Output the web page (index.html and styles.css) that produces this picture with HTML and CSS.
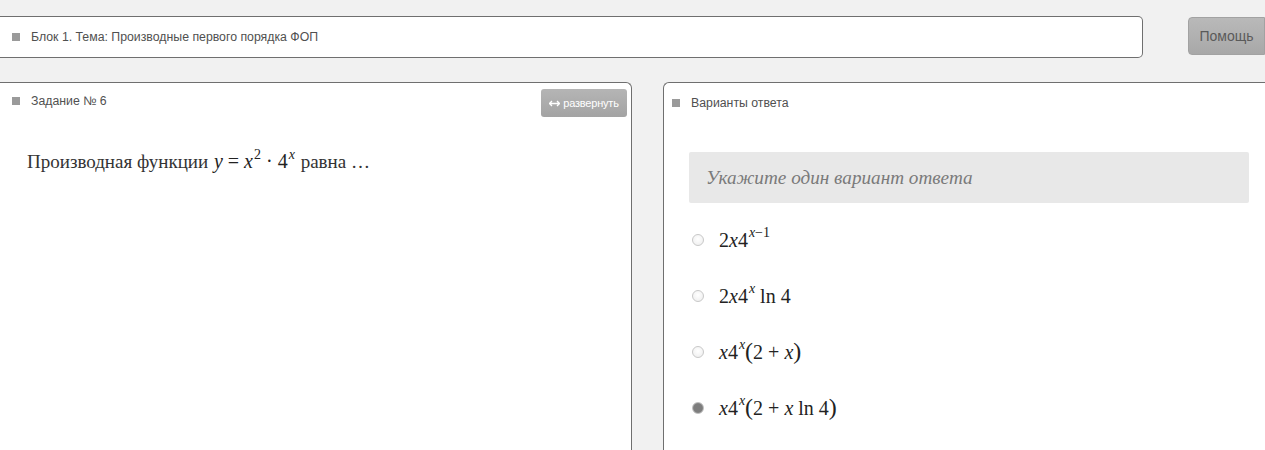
FILE: index.html
```html
<!DOCTYPE html>
<html lang="ru">
<head>
<meta charset="utf-8">
<title>Задание № 6</title>
<link rel="stylesheet" href="styles.css">
</head>
<body>
<div class="topbar">
  <div class="crumb"><span class="sq"></span>Блок 1. Тема: Производные первого порядка ФОП</div>
  <button class="help">Помощь</button>
</div>
<div class="panels">
  <section class="panel task">
    <div class="panel-head">
      <div class="title"><span class="sq"></span>Задание № 6</div>
      <button class="expand"><svg width="11" height="7" viewBox="0 0 11 7"><path d="M0.5 3.5h10M3 1L0.5 3.5 3 6M8 1l2.5 2.5L8 6" fill="none" stroke="#fff" stroke-width="1.3"/></svg>развернуть</button>
    </div>
    <p class="question">Производная функции <span class="m"><i>y</i> = <i>x</i><sup>2</sup> · 4<sup><i>x</i></sup></span> равна …</p>
  </section>
  <section class="panel answers">
    <div class="panel-head">
      <div class="title"><span class="sq"></span>Варианты ответа</div>
    </div>
    <div class="prompt">Укажите один вариант ответа</div>
    <ul class="options">
      <li><span class="radio"></span><span class="m">2<i>x</i>4<sup><i>x</i>−1</sup></span></li>
      <li><span class="radio"></span><span class="m">2<i>x</i>4<sup><i>x</i></sup> ln 4</span></li>
      <li><span class="radio"></span><span class="m"><i>x</i>4<sup><i>x</i></sup><span class="par">(</span>2 + <i>x</i><span class="par">)</span></span></li>
      <li><span class="radio checked"></span><span class="m"><i>x</i>4<sup><i>x</i></sup><span class="par">(</span>2 + <i>x</i> ln 4<span class="par">)</span></span></li>
    </ul>
  </section>
</div>
</body>
</html>
```
FILE: styles.css
```css
html, body {
  margin: 0;
  padding: 0;
}
body {
  width: 1265px;
  height: 450px;
  overflow: hidden;
  background: #f1f1f1;
  font-family: "Liberation Sans", Arial, sans-serif;
  color: #444;
}

.sq {
  display: inline-block;
  width: 8px;
  height: 8px;
  background: #9a9a9a;
  margin-right: 11px;
  flex: none;
}

/* breadcrumb bar and help button */
.topbar {
  display: flex;
  align-items: flex-start;
  padding-top: 16px;
  gap: 45px;
}
.crumb {
  flex: 1;
  height: 42px;
  box-sizing: border-box;
  background: #fff;
  border: 1px solid #6f6f6f;
  border-left: none;
  border-radius: 0 5px 5px 0;
  display: flex;
  align-items: center;
  padding-left: 12px;
  font-size: 12.3px;
  color: #505050;
}
.help {
  flex: none;
  width: 77px;
  height: 38px;
  margin-top: 1px;
  border: 1px solid #a2a2a2;
  border-radius: 4px 0 0 4px;
  background: linear-gradient(#b9b9b9, #a8a8a8);
  color: #5a5a5a;
  font-family: "Liberation Sans", Arial, sans-serif;
  font-size: 14px;
  padding: 0;
}

/* two panels */
.panels {
  display: grid;
  grid-template-columns: 632px 1fr;
  column-gap: 31px;
  margin-top: 24px;
  margin-right: -20px;
}
.panel {
  background: #fff;
  height: 380px;
  border-top: 1px solid #6f6f6f;
}
.task {
  border-right: 1px solid #6f6f6f;
  border-radius: 0 6px 0 0;
}
.answers {
  border-left: 1px solid #6f6f6f;
  border-radius: 6px 0 0 0;
}
.panel-head {
  display: flex;
  justify-content: space-between;
  align-items: flex-start;
}
.title {
  display: flex;
  align-items: center;
  font-size: 12.3px;
  color: #505050;
}
.task .panel-head {
  padding: 6px 4px 0 12px;
}
.task .title {
  margin-top: 5px;
}
.answers .panel-head {
  padding: 13px 0 0 8px;
}
.expand {
  width: 86px;
  height: 28px;
  border: none;
  border-radius: 3px;
  background: linear-gradient(#b5b5b5, #a3a3a3);
  color: #fff;
  font-family: "Liberation Sans", Arial, sans-serif;
  font-size: 11px;
  letter-spacing: -0.2px;
  display: flex;
  align-items: center;
  justify-content: center;
  gap: 3px;
  padding: 0;
}

.m {
  font-family: "Liberation Serif", "Times New Roman", serif;
  color: #222;
}
.m i {
  font-style: italic;
}
.m sup {
  font-size: 0.7em;
  line-height: 0;
  vertical-align: 0.65em;
  margin-left: 1px;
}
.par {
  font-size: 1.2em;
  line-height: 0;
}

.question {
  margin: 33px 0 0 27px;
  font-family: "Liberation Serif", "Times New Roman", serif;
  font-size: 19px;
  color: #333;
}
.question .m {
  margin: 0 1px;
  font-size: 20px;
}

.prompt {
  margin: 42px 36px 0 25px;
  height: 51px;
  background: #e8e8e8;
  border-radius: 2px;
  display: flex;
  align-items: center;
  padding-left: 17px;
  font-family: "Liberation Serif", "Times New Roman", serif;
  font-style: italic;
  font-size: 19.2px;
  color: #7a7a7a;
}

.options {
  list-style: none;
  margin: 9px 0 0 0;
  padding: 0 0 0 28px;
}
.options li {
  height: 56px;
  display: flex;
  align-items: center;
  gap: 15px;
}
.options .m {
  font-size: 20px;
}
.radio {
  width: 10px;
  height: 10px;
  border-radius: 50%;
  border: 1px solid #c8c8c8;
  background: radial-gradient(circle at 50% 40%, #fff, #ececec);
  flex: none;
}
.radio.checked {
  border-color: #bdbdbd;
  background: radial-gradient(circle, #7d7d7d 55%, #9a9a9a);
}
```
